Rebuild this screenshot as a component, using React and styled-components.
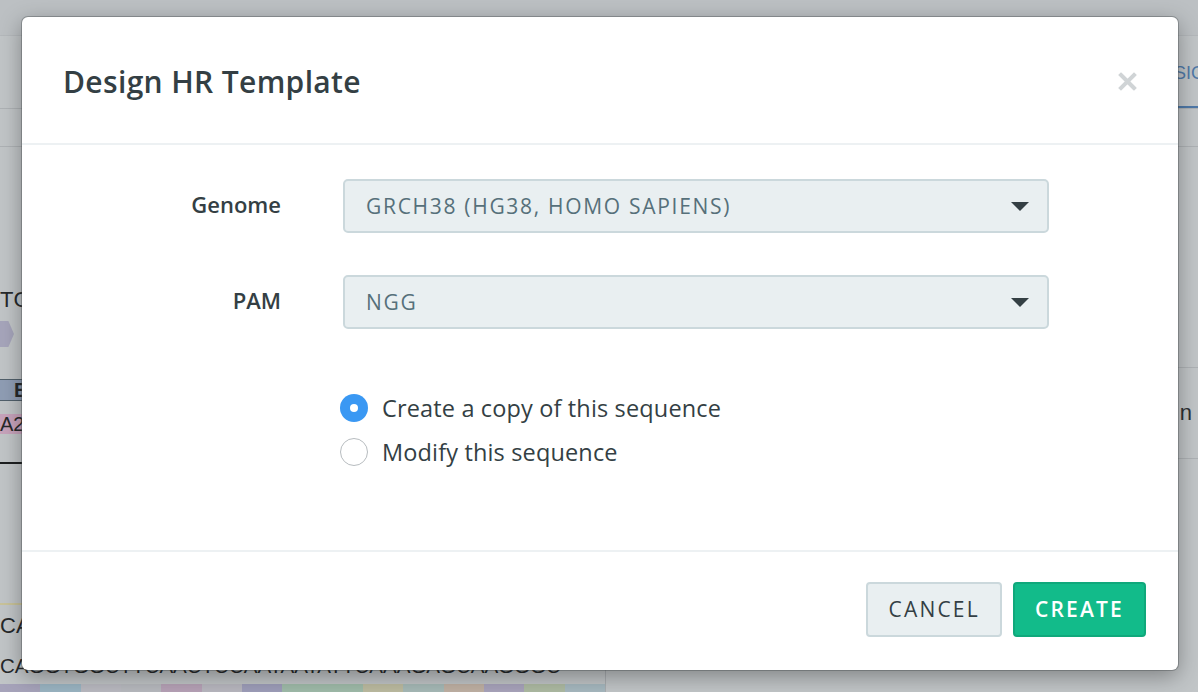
import React, { useState } from "react";
import styled, { createGlobalStyle } from "styled-components";

const GlobalStyle = createGlobalStyle`
  html, body {
    margin: 0;
    padding: 0;
    width: 1198px;
    height: 692px;
    overflow: hidden;
    font-family: "Open Sans", Lato, sans-serif;
  }
`;

const Page = styled.div`
  position: relative;
  width: 1198px;
  height: 692px;
  background: #c1c5c7;
  overflow: hidden;
`;

/* dimmed app behind the modal */
const AppTopBar = styled.div`
  height: 35px;
  background: #bcc0c3;
  border-bottom: 1px solid #b4b8bb;
`;

const AppBody = styled.div`
  display: grid;
  grid-template-columns: 606px 1fr;
  height: 656px;
`;

const LeftPane = styled.div`
  display: flex;
  flex-direction: column;
  border-right: 1px solid #a9adb0;
  font-family: "Liberation Sans", Arial, sans-serif;
  color: #26292b;
`;

const PaneRule = styled.div`
  height: ${p => p.h}px;
  border-bottom: 1px solid #aeb2b5;
`;

const SeqText = styled.div`
  font-size: ${p => p.size || 22}px;
  line-height: 26px;
  margin-top: ${p => p.mt || 0}px;
  white-space: nowrap;
`;

const Chevron = styled.div`
  margin-top: 8px;
  width: 14px;
  height: 26px;
  background: #a6a5bb;
  clip-path: polygon(0 0, 60% 0, 100% 50%, 60% 100%, 0 100%);
`;

const Band = styled.div`
  margin-top: ${p => p.mt || 0}px;
  height: 20px;
  background: ${p => p.color};
  font-size: 20px;
  line-height: 20px;
  font-weight: ${p => (p.bold ? 700 : 400)};
  border-top: ${p => (p.bold ? "1px solid #51606b" : "none")};
  border-bottom: ${p => (p.bold ? "1px solid #51606b" : "none")};
  padding-left: ${p => p.pad || 0}px;
`;

const BlackRule = styled.div`
  margin-top: 28px;
  height: 2px;
  background: #1d1f20;
`;

const Strands = styled.div`
  margin-top: 105px;
  height: 34px;
  border-bottom: 2px solid #c9c39a;
  background: linear-gradient(160deg, transparent 45%, #c9c39a 46%, #c9c39a 50%, transparent 51%);
`;

const Stripes = styled.div`
  margin-top: auto;
  display: flex;
  height: 8px;
`;

const Stripe = styled.div`
  flex: 1;
  background: ${p => p.color};
`;

const RightPane = styled.div`
  display: flex;
  flex-direction: column;
  font-family: "Liberation Sans", Arial, sans-serif;
`;

const TabRow = styled.div`
  height: 72px;
  display: flex;
  justify-content: flex-end;
  align-items: center;
  border-bottom: 1px solid #aeb2b5;
`;

const Tab = styled.div`
  color: #4f79a8;
  font-size: 18px;
  padding: 0 0 0 2px;
  height: 72px;
  line-height: 74px;
  border-bottom: 2px solid #4f79a8;
  box-sizing: border-box;
  width: 26px;
`;

const RightRow = styled.div`
  height: ${p => p.h}px;
  border-bottom: 1px solid #aeb2b5;
  display: flex;
  align-items: center;
  justify-content: flex-end;
  font-size: 22px;
  color: #2d3133;
  padding-right: 6px;
`;

/* modal */
const Modal = styled.div`
  position: absolute;
  left: 22px;
  top: 17px;
  width: 1156px;
  height: 653px;
  background: #ffffff;
  border-radius: 6px;
  box-shadow: 0 0 0 1px rgba(60, 66, 70, 0.35), 0 6px 22px rgba(0, 0, 0, 0.35);
  display: flex;
  flex-direction: column;
  color: #343f44;
`;

const Header = styled.div`
  height: 128px;
  box-sizing: border-box;
  border-bottom: 2px solid #edf1f3;
  display: flex;
  align-items: center;
  justify-content: space-between;
  padding: 2px 40px 0 41px;
`;

const Title = styled.h2`
  margin: 0;
  font-size: 30px;
  font-weight: 600;
  letter-spacing: 0.35px;
  color: #343f44;
`;

const CloseButton = styled.button`
  border: none;
  background: none;
  padding: 0;
  width: 22px;
  height: 22px;
  cursor: pointer;
  display: flex;
  align-items: center;
  justify-content: center;
`;

const Body = styled.div`
  flex: 1;
  display: flex;
  flex-direction: column;
  padding: 34px 0 0 0;
`;

const FieldRow = styled.div`
  display: grid;
  grid-template-columns: 259px 706px;
  column-gap: 62px;
  align-items: center;
  margin-bottom: ${p => p.mb || 0}px;
`;

const Label = styled.label`
  text-align: right;
  font-size: 22px;
  font-weight: 600;
  color: #343f44;
  margin-top: -4px;
`;

const Select = styled.div`
  height: 54px;
  box-sizing: border-box;
  background: #e9eff1;
  border: 2px solid #cbd8dc;
  border-radius: 5px;
  display: flex;
  align-items: center;
  justify-content: space-between;
  padding: 0 18px 0 21px;
  font-size: 21px;
  letter-spacing: 1.7px;
  text-transform: uppercase;
  color: #56707a;
`;

const Caret = styled.span`
  width: 0;
  height: 0;
  border-left: 9px solid transparent;
  border-right: 9px solid transparent;
  border-top: 9px solid #343f44;
`;

const RadioGroup = styled.div`
  margin: 64px 0 0 318px;
  display: flex;
  flex-direction: column;
  gap: 14px;
`;

const RadioRow = styled.label`
  display: flex;
  align-items: center;
  gap: 14px;
  font-size: 23.5px;
  letter-spacing: 0.15px;
  line-height: 30px;
  color: #343f44;
  cursor: pointer;
`;

const RadioDot = styled.span`
  width: 28px;
  height: 28px;
  flex-shrink: 0;
  box-sizing: border-box;
  border-radius: 50%;
  border: ${p => (p.checked ? "none" : "1.5px solid #b7bcbf")};
  background: ${p => (p.checked ? "#3a98f3" : "#ffffff")};
  display: flex;
  align-items: center;
  justify-content: center;
  &::after {
    content: "";
    width: 8px;
    height: 8px;
    border-radius: 50%;
    background: #ffffff;
    display: ${p => (p.checked ? "block" : "none")};
  }
`;

const Footer = styled.div`
  height: 120px;
  box-sizing: border-box;
  border-top: 2px solid #edf1f3;
  display: flex;
  align-items: center;
  justify-content: flex-end;
  gap: 11px;
  padding: 0 32px 4px 0;
`;

const Button = styled.button`
  height: 55px;
  box-sizing: border-box;
  border-radius: 4px;
  padding: 0 20px;
  font-family: "Open Sans", Lato, sans-serif;
  font-size: 21px;
  letter-spacing: 2.2px;
  text-transform: uppercase;
  cursor: pointer;
  background: ${p => (p.primary ? "#12bb8a" : "#e9eff1")};
  color: ${p => (p.primary ? "#ffffff" : "#343f44")};
  border: 2px solid ${p => (p.primary ? "#0fa87b" : "#cbd8dc")};
  font-weight: ${p => (p.primary ? 600 : 500)};
`;

const stripeColors = [
  "#a6a3ba", "#9ab4c2", "#b9b9c0", "#b7b9be", "#b6a1b6", "#b8b7bf", "#9d9db9",
  "#9fbba9", "#9fbba9", "#bcbba0", "#a6b9b6", "#bfb0a3", "#a8a3bb", "#adbaa2", "#a6b8bf"
];

const App = () => {
  const [mode, setMode] = useState("copy");

  return (
    <>
      <GlobalStyle />
      <Page>
        <AppTopBar />
        <AppBody>
          <LeftPane>
            <PaneRule h={72} />
            <PaneRule h={37} />
            <SeqText mt={140}>TG</SeqText>
            <Chevron />
            <Band mt={32} color="#8f9db4" bold pad={14}>E</Band>
            <Band mt={13} color="#c7a3bb">A2</Band>
            <BlackRule />
            <Strands />
            <SeqText mt={8}>CA</SeqText>
            <SeqText mt={14} size={20.5}>CAGGTGGCTTCAACTCCAATAATATTCAAAGAGCAAGGGC</SeqText>
            <Stripes>
              {stripeColors.map((c, i) => (
                <Stripe key={i} color={c} />
              ))}
            </Stripes>
          </LeftPane>
          <RightPane>
            <TabRow>
              <Tab>SIG</Tab>
            </TabRow>
            <RightRow h={37} />
            <RightRow h={220} />
            <RightRow h={90}>n</RightRow>
          </RightPane>
        </AppBody>

        <Modal>
          <Header>
            <Title>Design HR Template</Title>
            <CloseButton aria-label="Close">
              <svg width="19" height="19" viewBox="0 0 19 19">
                <path d="M3 3 L16 16 M16 3 L3 16" stroke="#d0d4d6" strokeWidth="4" strokeLinecap="square" />
              </svg>
            </CloseButton>
          </Header>
          <Body>
            <FieldRow mb={42}>
              <Label>Genome</Label>
              <Select>
                GRCh38 (hg38, Homo sapiens)
                <Caret />
              </Select>
            </FieldRow>
            <FieldRow>
              <Label>PAM</Label>
              <Select>
                NGG
                <Caret />
              </Select>
            </FieldRow>
            <RadioGroup>
              <RadioRow onClick={() => setMode("copy")}>
                <RadioDot checked={mode === "copy"} />
                Create a copy of this sequence
              </RadioRow>
              <RadioRow onClick={() => setMode("modify")}>
                <RadioDot checked={mode === "modify"} />
                Modify this sequence
              </RadioRow>
            </RadioGroup>
          </Body>
          <Footer>
            <Button>Cancel</Button>
            <Button primary>Create</Button>
          </Footer>
        </Modal>
      </Page>
    </>
  );
};

export default App;
